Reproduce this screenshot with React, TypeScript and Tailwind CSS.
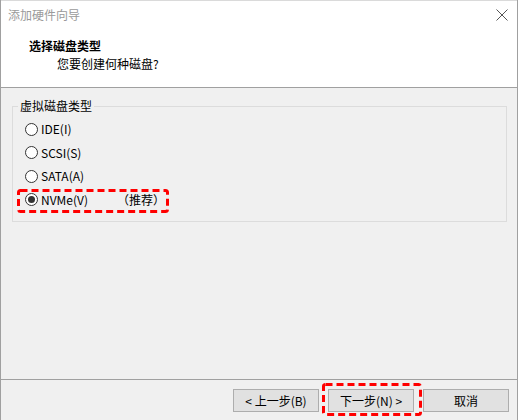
import type { ReactNode } from 'react';

function Radio({ checked }: { checked?: boolean }) {
  return (
    <div className="w-[13px] h-[13px] rounded-full border border-[#333333] bg-white flex items-center justify-center shrink-0">
      {checked && <div className="w-[7px] h-[7px] rounded-full bg-[#333333]" />}
    </div>
  );
}

function DashedMark({ w, h, className }: { w: number; h: number; className: string }) {
  return (
    <svg width={w} height={h} className={`absolute pointer-events-none ${className}`}>
      <rect
        x={1.5}
        y={1.5}
        width={w - 3}
        height={h - 3}
        rx={2}
        fill="none"
        stroke="#ff0000"
        strokeWidth={3}
        strokeDasharray="7 4"
      />
    </svg>
  );
}

function Option({ label, checked, children }: { label: string; checked?: boolean; children?: ReactNode }) {
  return (
    <div className="relative flex items-center h-[23.5px] pl-[12px]">
      <Radio checked={checked} />
      <span className="ml-[3px] w-[76px] text-black">{label}</span>
      {children}
    </div>
  );
}

function Button({ label, children }: { label: string; children?: ReactNode }) {
  return (
    <div className="relative">
      <button className="w-[86px] h-[23px] bg-[#e1e1e1] border border-[#adadad] text-black text-[12px] leading-[16px] flex items-center justify-center">
        {label}
      </button>
      {children}
    </div>
  );
}

export default function App() {
  return (
    <div className="w-[518px] h-[420px] flex flex-col bg-[#f0f0f0] border-x border-[#a0a0a0] overflow-hidden font-['Noto_Sans_CJK_SC',sans-serif] text-[12px] leading-[16px]">
      {/* header */}
      <div className="h-[88px] shrink-0 bg-white border-t border-b border-t-[#dadada] border-b-[#a0a0a0]">
        <div className="flex items-center justify-between mt-[6px] pl-[7px] pr-[9px]">
          <span className="text-[#9a9a9a]">添加硬件向导</span>
          <svg width="12" height="12" viewBox="0 0 12 12">
            <path d="M0.5 0.5 L11.5 11.5 M11.5 0.5 L0.5 11.5" stroke="#555555" strokeWidth="1" />
          </svg>
        </div>
        <div className="mt-[15px] pl-[28px] font-bold text-black">选择磁盘类型</div>
        <div className="mt-[2px] pl-[56px] text-black">您要创建何种磁盘?</div>
      </div>

      {/* body */}
      <div className="h-[292px] shrink-0 border-b border-[#a0a0a0]">
        <fieldset className="mt-[10px] ml-[11px] w-[495px] border border-[#dcdcdc] pb-[9.5px]">
          <legend className="ml-[5px] px-[2px] text-black">虚拟磁盘类型</legend>
          <div className="pt-[3.5px]">
            <Option label="IDE(I)" />
            <Option label="SCSI(S)" />
            <Option label="SATA(A)" />
            <Option label="NVMe(V)" checked>
              <span className="text-black">（推荐）</span>
              <DashedMark w={152} h={24} className="left-[4px] top-[1px]" />
            </Option>
          </div>
        </fieldset>
      </div>

      {/* footer */}
      <div className="flex-1 flex justify-end gap-[9px] pt-[9px] pr-[8px]">
        <Button label="< 上一步(B)" />
        <Button label="下一步(N) >">
          <DashedMark w={100} h={33} className="-left-[6px] -top-[6px]" />
        </Button>
        <Button label="取消" />
      </div>
    </div>
  );
}
